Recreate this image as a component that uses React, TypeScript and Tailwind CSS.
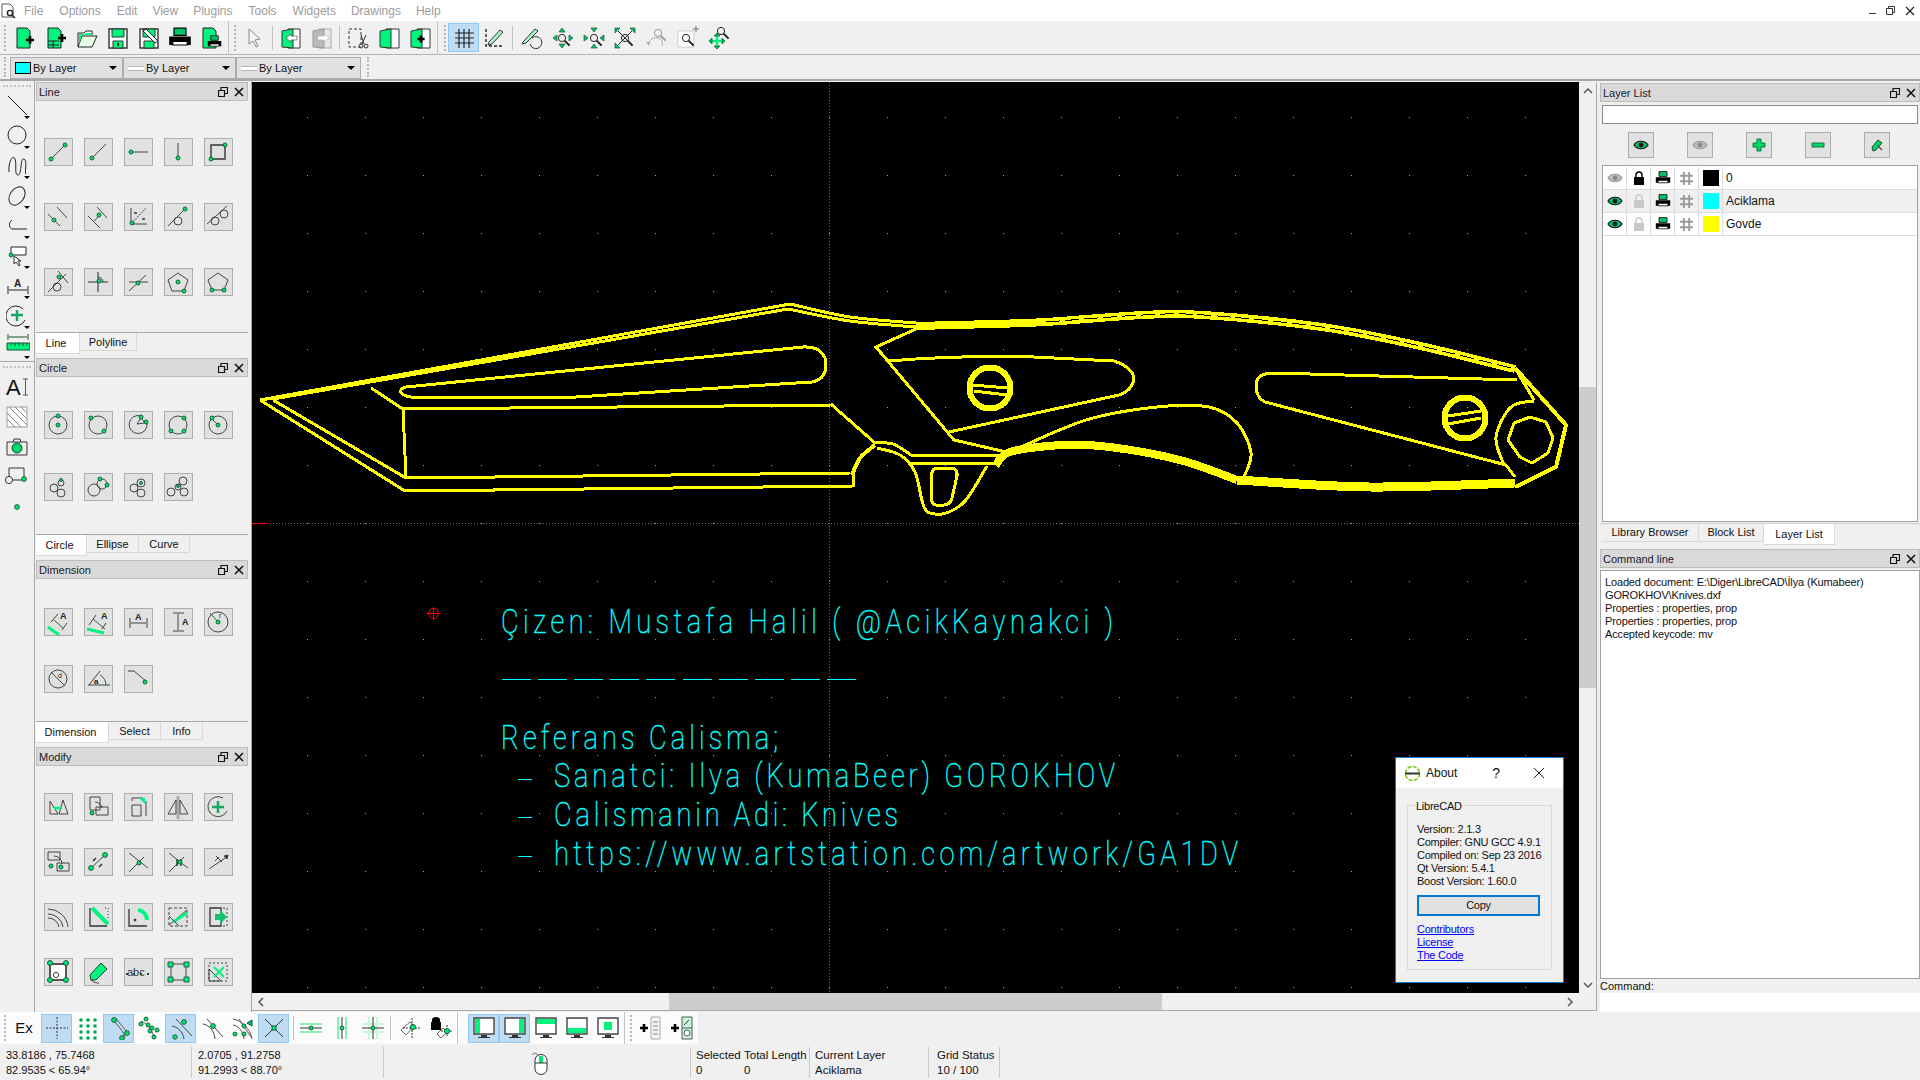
import React from 'react';

type Pt = [number, number];

// catmull-rom through the traced points, good enough for the knife curves
const smooth = (pts: Pt[]) => {
  let d = `M${pts[0][0]} ${pts[0][1]}`;
  for (let i = 0; i < pts.length - 1; i++) {
    const p0 = pts[i - 1] || pts[i];
    const p1 = pts[i];
    const p2 = pts[i + 1];
    const p3 = pts[i + 2] || p2;
    d += `C${p1[0] + (p2[0] - p0[0]) / 6} ${p1[1] + (p2[1] - p0[1]) / 6} ${p2[0] - (p3[0] - p1[0]) / 6} ${p2[1] - (p3[1] - p1[1]) / 6} ${p2[0]} ${p2[1]}`;
  }
  return d;
};

const GREEN = '#00f57f';

const Dot = ({ x, y, r = 2 }: { x: number; y: number; r?: number }) => (
  <circle cx={x} cy={y} r={r} fill="#00e676" stroke="#14532d" strokeWidth={0.9} />
);

const Mag = ({ x, y, c = '#222' }: { x: number; y: number; c?: string }) => (
  <g fill="none" stroke={c}>
    <circle cx={x} cy={y} r={3.6} strokeWidth={1} />
    <path d={`M${x + 2.6} ${y + 2.6}l5 5`} strokeWidth={2} />
  </g>
);

/* ---------- dock panel buttons, drawn in a 29x28 box ---------- */
const lineTools = [
  <><path d="M7 21 21 7" /><Dot x={7} y={21} /><Dot x={21} y={7} /></>,
  <><path d="M8 20 22 6" /><Dot x={8} y={20} /></>,
  <><path d="M7 14h17" /><Dot x={7} y={14} /></>,
  <><path d="M14 5v15" /><Dot x={14} y={20} /></>,
  <><path d="M7 7h14v14H7z" strokeWidth={1.4} /><Dot x={21} y={7} /><Dot x={7} y={21} /></>,
  <><path d="M13 4 23 15M4 11 16 23" /><Dot x={10} y={17} /></>,
  <><path d="M4 13 16 25M13 4 23 15" /><path d="M10 18 16 12" /><Dot x={15} y={12} /></>,
  <><path d="M7 5v16h16" /><path d="M7 21 22 5" strokeDasharray="2 1" /><path d="M10 10h3M18 16h3" strokeWidth={1.6} /><Dot x={8} y={20} /></>,
  <><path d="M4 23 21 6" /><circle cx={14} cy={18} r={4} /><Dot x={21} y={6} /></>,
  <><path d="M3 21 23 3" /><circle cx={11} cy={18} r={4} /><circle cx={20} cy={11} r={4} /></>,
  <><path d="M4 24 22 6M14 3l10 12" /><circle cx={13} cy={19} r={4} /><Dot x={15} y={9} /></>,
  <><path d="M4 14h20M14 4v20" strokeWidth={1.1} /><path d="M14 9a5 5 0 0 1 5 5" /><Dot x={15} y={13} /></>,
  <><path d="M5 23 22 7M5 14h19" /><Dot x={14} y={15} /></>,
  <><path d="M14 5 24 12 20 23H8L4 12z" /><Dot x={14} y={14} /><Dot x={20} y={23} /></>,
  <><path d="M14 5 24 12 20 22H8L4 12z" /><Dot x={8} y={22} /><Dot x={20} y={22} /></>,
];

const circleTools = [
  <><circle cx={14} cy={14} r={9} /><Dot x={14} y={5} /><Dot x={14} y={14} /></>,
  <><circle cx={14} cy={14} r={9} /><Dot x={7} y={7} /><Dot x={20} y={20} /></>,
  <><path d="M23 12a9 9 0 1 1-6-7" /><path d="M13 13l4-6 4 5z" /><Dot x={17} y={6} /><Dot x={22} y={11} /></>,
  <><circle cx={14} cy={14} r={9} /><Dot x={7} y={20} /><Dot x={20} y={20} /><Dot x={20} y={7} /></>,
  <><circle cx={14} cy={14} r={9} /><path d="M8 8l6 6" /><Dot x={8} y={7} /><Dot x={14} y={14} /></>,
  <><circle cx={10} cy={15} r={4} /><circle cx={17} cy={20} r={4} /><circle cx={17} cy={10} r={3} /><Dot x={17} y={7} r={1.5} /></>,
  <><circle cx={10} cy={17} r={6} /><circle cx={18} cy={11} r={5} /><Dot x={16} y={6} /><Dot x={23} y={12} /></>,
  <><circle cx={10} cy={15} r={4} /><circle cx={17} cy={20} r={4} /><circle cx={17} cy={10} r={4} /><Dot x={17} y={10} r={1.5} /></>,
  <><circle cx={7} cy={19} r={4} /><circle cx={20} cy={19} r={4} /><circle cx={19} cy={8} r={4} /><circle cx={14} cy={14} r={3} /><Dot x={14} y={13} r={1.5} /></>,
];

const Letter = ({ x, y, s = '9px' }: { x: number; y: number; s?: string }) => (
  <text x={x} y={y} fontSize={s} fontWeight="bold" fill="#222" stroke="none" fontFamily="Liberation Sans">A</text>
);

const dimTools = [
  <><path d="M4 19 15 27" stroke={GREEN} strokeWidth={3} /><path d="M7 14 14 6M18 22l5-7" /><path d="M10 12l9 8" stroke="#14532d" /><Letter x={16} y={11} /></>,
  <><path d="M3 21 20 25" stroke={GREEN} strokeWidth={3} /><path d="M5 17 12 7M18 21l4-6" /><path d="M9 11l12 10" stroke="#14532d" /><Letter x={17} y={11} /></>,
  <><path d="M6 10v10M23 10v10M7 15h15" /><Letter x={11} y={12} /></>,
  <><path d="M9 5h11M9 23h11M14 6v16" /><Letter x={18} y={17} /></>,
  <><circle cx={14} cy={14} r={10} /><path d="M6 5l8 9" stroke="#14532d" /><Dot x={14} y={14} /><text x={15} y={10} fontSize="7px" fill="#222" stroke="none">r</text></>,
  <><circle cx={14} cy={14} r={9} /><path d="M7 7l14 14" stroke="#14532d" /><text x={14} y={13} fontSize="7px" fill="#222" stroke="none">d</text></>,
  <><path d="M4 20h22M5 20 16 6" /><path d="M16 10a12 12 0 0 1 6 10" stroke="#14532d" /><text x={10} y={19} fontSize="8px" fontWeight="bold" fill="#222" stroke="none">a</text></>,
  <><path d="M4 6h6l13 11" /><Dot x={21} y={17} /></>,
];

const modifyTools = [
  <><path d="M6 21V8l8 13zM15 21l4-14 5 14z" /><path d="M10 15h8" stroke={GREEN} strokeWidth={2.5} /></>,
  <><path d="M6 4h10v13H6zM12 14h12v8H12z" /><path d="M11 9a7 7 0 0 1 7 6" /><Dot x={8} y={20} /></>,
  <><path d="M8 12h9v11H8zM8 8V5h11M22 8v15" /><path d="M15 5h6v6z" fill={GREEN} stroke="none" /></>,
  <><path d="M14 3v23" stroke="#aaa" strokeWidth={3} /><path d="M4 21 12 7v14zM24 21 16 7v14z" /></>,
  <><path d="M23 18a10 10 0 1 1-4-13" /><path d="M14 8v12M8 14h12" stroke="#17a860" strokeWidth={2.5} /></>,
  <><path d="M4 4h12v8H4zM13 15h12v8H13z" /><path d="M10 8a8 8 0 0 1 8 8" /><Dot x={7} y={18} /><Dot x={17} y={19} /></>,
  <><path d="M7 20 21 7" /><path d="M9 13l3-3M15 19l3-3" strokeWidth={1.5} /><Dot x={7} y={20} r={2.4} /><Dot x={21} y={7} r={2.4} /></>,
  <><path d="M5 5 24 20M5 24 20 9" /><Dot x={15} y={15} /></>,
  <><path d="M5 5 16 14 24 20M5 24 20 9" /><path d="M13 11v7M17 11v7" stroke="#14532d" strokeWidth={1.6} /><Dot x={16} y={14} /></>,
  <><path d="M5 21 24 8" /><path d="M12 8l6 6M15 9l-4 4" /><path d="M20 8l4-1-1 4z" fill="#14532d" /></>,
  <><path d="M4 6a20 20 0 0 1 20 18M4 11a15 15 0 0 1 15 13M4 15a11 11 0 0 1 11 9" /></>,
  <><path d="M6 5v18h17" strokeWidth={1.3} /><path d="M8 5 24 21" stroke={GREEN} strokeWidth={4} /><path d="M21 5h3v10" strokeDasharray="1 2" /></>,
  <><path d="M5 6v17h18" strokeWidth={1.3} /><path d="M14 7a10 10 0 0 1 9 10" stroke={GREEN} strokeWidth={4} /><circle cx={11} cy={17} r={1} fill="#222" /></>,
  <><path d="M5 5h18v18H5z" strokeDasharray="3 2" /><path d="M5 22 23 7" /><path d="M9 19 23 10" stroke={GREEN} strokeWidth={3} /><path d="M5 13l10 10" /></>,
  <><path d="M6 5h11v18H6z" strokeWidth={1.3} /><path d="M19 5h4v18h-4" strokeDasharray="2 2" /><path d="M11 11h5V7l7 7-7 7v-4h-5z" fill="#17c06c" stroke="none" /></>,
  <><path d="M6 6h16v16H6z" fill="#fff" strokeWidth={2} stroke="#555" /><circle cx={12} cy={17} r={2.6} /><Dot x={6} y={5} r={2.5} /><Dot x={22} y={5} r={2.5} /><Dot x={6} y={22} r={2.5} /><Dot x={22} y={22} r={2.5} /></>,
  <><path d="M6 17 17 5l6 6-11 11H7z" fill={GREEN} stroke="#222" /><path d="M7 22c3 3 6 3 8 3" /></>,
  <><text x={3} y={18} fontSize="11px" fill="#333" stroke="none" fontFamily="Liberation Sans">abc</text><path d="M2 16h24" stroke="#14532d" strokeDasharray="2 5" strokeWidth={2} /></>,
  <><path d="M7 6h15v16H7z" /><path d="M4 4h5v5H4zM20 4h5v5h-5zM4 19h5v5H4zM20 19h5v5h-5z" fill={GREEN} stroke="#14532d" /></>,
  <><path d="M5 5h18v18H5z" strokeDasharray="2 2" /><path d="M5 11v12h12z" /><path d="M10 9 20 19M20 9 10 19" stroke={GREEN} strokeWidth={2} /></>,
];

/* ---------- 24px toolbar icons ---------- */
const page = 'M4 2h10l3 3v17H4z';
const Plus = ({ x, y, s = 4 }: { x: number; y: number; s?: number }) => (
  <path d={`M${x - s} ${y}h${2 * s}M${x} ${y - s}v${2 * s}`} stroke="#000" strokeWidth={2.6} fill="none" />
);
const Printer = ({ x, y, k = 1 }: { x: number; y: number; k?: number }) => (
  <g transform={`translate(${x} ${y}) scale(${k})`}>
    <path d="M5 1h10v6H5z" fill="#00c46a" stroke="#000" />
    <path d="M1 8h18v7h-3v-3H4v3H1z" fill="#000" />
    <path d="M4 12h12v3H4z" fill="#fff" stroke="#000" />
  </g>
);
const Tri = ({ p }: { p: string }) => <path d={p} fill="#00c46a" stroke="#14532d" strokeWidth={0.7} />;

const topIcons: Record<string, React.ReactNode> = {
  newdoc: <><path d={page} fill={GREEN} stroke="#222" /><Plus x={17} y={14} /></>,
  template: <><path d={page} fill={GREEN} stroke="#222" /><path d="M4 15h11M4 19h11M9 15v7" stroke="#222" /><Plus x={18} y={12} /></>,
  open: <><path d="M3 21V7h6l2-2h6v4" fill="#fff" stroke="#222" /><path d="M3 21 7 10h15l-5 11z" fill="#e6ffe6" stroke="#222" /><path d="M4 18V8h6l1-1h5v2H7z" fill={GREEN} /></>,
  save: <><path d="M3 3h18v19H3z" fill="#fff" stroke="#333" strokeWidth={1.4} /><path d="M6 3h12v8H6zM7 15h10v7H7z" fill={GREEN} stroke="#333" /><path d="M11 17h2v3h-2z" fill="#333" /></>,
  saveas: <><path d="M3 3h18v19H3z" fill="#fff" stroke="#333" strokeWidth={1.4} /><path d="M6 3h12v8H6zM7 15h10v7H7z" fill={GREEN} stroke="#333" /><path d="M6 5l12 12 3-2L9 3z" fill="#fff" stroke="#222" /></>,
  print: <Printer x={0} y={1} k={1.2} />,
  preview: <><path d={page} fill={GREEN} stroke="#222" /><Printer x={8} y={9} k={0.75} /></>,
  arrow: <path d="M7 3v15l4-3 3 6 2-1-3-6 5-1z" fill="#f4f4f4" stroke="#888" />,
  prevdoc: <><path d="M9 3h12v19H9z" fill="#fff" stroke="#333" /><path d="M3 5l11-2v19l-11-1z" fill={GREEN} stroke="#333" /><path d="M7 12l5-4v2h6v4h-6v2z" fill="#fff" stroke="#333" strokeWidth={0.6} /></>,
  nextdoc: <><path d="M9 3h12v19H9z" fill="#e8e8e8" stroke="#aaa" /><path d="M3 5l11-2v19l-11-1z" fill="#b9b9b9" stroke="#999" /><path d="M19 12l-5-4v2H8v4h6v2z" fill="#fff" stroke="#aaa" strokeWidth={0.6} /></>,
  cut: <><path d="M3 3h12v18H3z" fill="none" stroke="#333" strokeDasharray="3 2" /><path d="M15 9l3 9M20 9l-4 9" stroke="#333" /><circle cx={15} cy={20} r={2} fill="none" stroke="#333" /><circle cx={20} cy={20} r={2} fill="none" stroke="#333" /></>,
  book: <><path d="M9 3h13v19H9z" fill="#fff" stroke="#333" /><path d="M3 5l11-2v19l-11-1z" fill={GREEN} stroke="#333" /></>,
  bookplus: <><path d="M9 3h13v19H9z" fill="#fff" stroke="#333" /><path d="M3 5l11-2v19l-11-1z" fill={GREEN} stroke="#333" /><Plus x={13} y={13} s={3.6} /></>,
  grid: <path d="M7 3v19M12 3v19M17 3v19M3 7h19M3 12h19M3 17h19" stroke="#222" strokeWidth={1.2} fill="none" />,
  draft: <><path d="M3 3v17h18" stroke="#222" strokeWidth={1.4} strokeDasharray="3 2" fill="none" /><path d="M6 16 17 4l3 2L9 18l-4 1z" fill="#a6f5c6" stroke="#333" /></>,
  redraw: <><path d="M3 16 15 3l3 2L6 17l-4 1z" fill="#a6f5c6" stroke="#333" /><path d="M12 12a6 6 0 1 1-2 6" fill="none" stroke="#333" /></>,
  zoomin: <><Mag x={11} y={12} /><Tri p="M11 2l3 4H8z" /><Tri p="M11 22l3-4H8z" /><Tri p="M2 12l4-3v6z" /><Tri p="M22 12l-4-3v6z" /></>,
  zoomout: <><Mag x={12} y={12} /><Tri p="M12 6l3-4H9z" /><Tri p="M12 18l3 4H9z" /><Tri p="M6 12l-4-3v6z" /><Tri p="M18 12l4-3v6z" /></>,
  zoomauto: <><path d="M5 5l14 14M19 5 5 19" stroke="#222" fill="none" /><Mag x={12} y={12} /><Tri p="M2 2h5L2 7z" /><Tri p="M22 2h-5l5 5z" /><Tri p="M2 22h5l-5-5z" /></>,
  zoomprev: <><Mag x={14} y={7} c="#999" /><path d="M4 18a9 9 0 0 1 11-6 6 6 0 0 1 3 8" stroke="#aaa" fill="none" /><path d="M2 16l4 0-1 4z" fill="#aaa" /></>,
  zoomwin: <><path d="M3 5h16v16H3z" fill="#fff" stroke="#ccc" /><Mag x={11} y={12} /><path d="M21 0v6M18 3h6" stroke="#777" /></>,
  zoompan: <><path d="M5 15h12M11 9v12" stroke={GREEN} strokeWidth={2.4} fill="none" /><Tri p="M3 15l3-3v6z" /><Tri p="M19 15l-3-3v6z" /><Tri p="M11 23l-3-3h6z" /><Tri p="M11 7l-3 3h6z" /><Mag x={15} y={5} /></>,
};

const sideIcons: Record<string, React.ReactNode> = {
  line: <path d="M2 2 21 21" stroke="#222" fill="none" />,
  circle: <circle cx={11} cy={11} r={9} fill="none" stroke="#222" />,
  spline: <path d="M3 18C2 8 7 0 9 5s-1 16 3 16 2-18 6-16 0 14 2 15" fill="none" stroke="#222" />,
  ellipse: <ellipse cx={11} cy={12} rx={7} ry={10} transform="rotate(35 11 12)" fill="none" stroke="#222" />,
  poly: <path d="M6 6c-4 3-3 9 1 9h14" fill="none" stroke="#222" />,
  select: <><path d="M5 3h15v8H5z" fill="#fff" stroke="#222" /><Dot x={5} y={11} /><path d="M8 12v8l2-2 3 4 1-1-2-4h3z" fill="#fff" stroke="#333" /></>,
  dim: <><path d="M2 12v8M22 12v8M3 16h18" stroke="#222" fill="none" /><text x={8} y={13} fontSize="10px" fontWeight="bold" fontFamily="Liberation Sans" fill="#222">A</text></>,
  rotate: <><path d="M19 16a10 10 0 1 1-2-11" fill="none" stroke="#222" /><path d="M11 6v11M5 11h12" stroke="#17a860" strokeWidth={2.4} /></>,
  measure: <><path d="M2 0v6M22 0v6M3 3h18" stroke="#14532d" fill="none" /><path d="M1 9h23v7H1z" fill={GREEN} stroke="#14532d" /><path d="M5 9v3M9 9v3M13 9v3M17 9v3M21 9v3" stroke="#14532d" /></>,
  text: <><text x={1} y={20} fontSize="22px" fontFamily="Liberation Sans" fill="#111">A</text><path d="M18 4h5M20.500 4v16M18 20h5" stroke="#555" fill="none" /></>,
  hatch: <><path d="M2 2h20v20H2z" fill="#fff" stroke="#bbb" strokeWidth={1.4} /><path d="M2 8 8 2M2 14 14 2M2 20 20 2M8 22 22 8M14 22l8-8" transform="matrix(-1 0 0 1 24 0)" stroke="#888" fill="none" /></>,
  camera: <><path d="M2 7h20v13H2zM8 7l1-3h6l1 3" fill="#eee" stroke="#333" /><circle cx={12} cy={13} r={5} fill="#00d46a" stroke="#14532d" /></>,
  block: <><path d="M4 12V3h15v9" fill="none" stroke="#333" /><circle cx={4} cy={15} r={3.6} fill="none" stroke="#333" /><path d="M7 15h12" stroke="#333" /><Dot x={19} y={14} r={2.4} /></>,
  dot: <Dot x={12} y={12} r={2.4} />,
};

const bottomIcons: Record<string, React.ReactNode> = {
  cross: <path d="M1 12h22M12 1v22" stroke="#333" strokeDasharray="2 1.5" fill="none" />,
  gridsnap: <>{[4, 10, 16, 22].flatMap(y => [5, 12, 19].map(x => <circle key={`${x}-${y}`} cx={x} cy={y} r={1.8} fill="#00a85a" />))}</>,
  endpoint: <><path d="M6 3c3 6 9 9 12 18M9 2c3 6 9 9 12 17" stroke="#555" fill="none" /><Dot x={7} y={4} r={2.4} /><Dot x={20} y={17} r={2.4} /><Dot x={15} y={22} r={2.4} /></>,
  entity: <><path d="M3 5c6 2 11 9 14 18" stroke="#555" fill="none" /><Dot x={3} y={8} r={2} /><Dot x={8} y={3} r={2} /><Dot x={10} y={9} r={2} /><Dot x={14} y={12} r={2} /><Dot x={19} y={14} r={2} /><Dot x={16} y={21} r={2} /><Dot x={12} y={15} r={2} /></>,
  center: <><path d="M3 10c6 1 11 6 12 13M7 3l16 17" stroke="#444" fill="none" /><Dot x={6} y={21} r={2.2} /><Dot x={15} y={6} r={2.4} /></>,
  intersect: <><path d="M3 8c6 1 11 6 12 15M7 3l16 18" stroke="#444" fill="none" /><Dot x={13} y={10} r={2.4} /></>,
  middle: <><path d="M2 9c6 1 10 6 11 14M2 3c9 2 17 9 19 20M8 3l12 18" stroke="#555" fill="none" /><Dot x={13} y={10} r={2} /><Dot x={4} y={18} r={2} /><Dot x={13} y={18} r={2} /><path d="M21 4l-5 3 5 3z" fill="#00c46a" stroke="#14532d" /></>,
  cross2: <><path d="M3 3l18 18M21 3 3 21" stroke="#333" fill="none" /><path d="M10 10h4v4h-4z" fill={GREEN} stroke="#14532d" /></>,
  resH: <><path d="M1 8h22M1 16h22" stroke="#8ef0b8" strokeWidth={2} fill="none" /><path d="M1 12h22" stroke="#333" /><Dot x={12} y={12} /></>,
  resV: <><path d="M8 1v22M16 1v22" stroke="#8ef0b8" strokeWidth={2} fill="none" /><path d="M12 1v22" stroke="#333" /><Dot x={12} y={12} /></>,
  resB: <><path d="M8 1v22M16 1v22M1 8h22M1 16h22" stroke="#c8f8dc" strokeWidth={2} fill="none" /><path d="M12 1v22M1 12h22" stroke="#333" /><Dot x={12} y={12} /></>,
  tag: <><path d="M3 14 12 6l4 4-8 9z" fill="#fff" stroke="#666" /><path d="M14 2v20M5 12h18" stroke="#333" strokeDasharray="2 1" /><Dot x={15} y={11} r={2.6} /></>,
  locktag: <><path d="M3 4a4 3 0 0 1 8 0v2h1v8H2V6h1z" fill="#000" /><path d="M8 18l6-6 4 4-6 6z" fill="#fff" stroke="#666" /><path d="M18 9v12M12 15h11" stroke="#333" strokeDasharray="2 1" /><Dot x={18} y={15} r={2.6} /></>,
  screen1: <><path d="M2 2h20v16H2z" fill="#fff" stroke="#444" strokeWidth={1.4} /><path d="M3 3h5v14H3z" fill={GREEN} /><path d="M9 19h6v2h3v1H6v-1h3z" fill="#333" /></>,
  screen2: <><path d="M2 2h20v16H2z" fill="#fff" stroke="#444" strokeWidth={1.4} /><path d="M16 3h5v14h-5z" fill={GREEN} /><path d="M9 19h6v2h3v1H6v-1h3z" fill="#333" /></>,
  screen3: <><path d="M2 2h20v16H2z" fill="#fff" stroke="#444" strokeWidth={1.4} /><path d="M3 3h18v5H3z" fill={GREEN} /><path d="M9 19h6v2h3v1H6v-1h3z" fill="#333" /></>,
  screen4: <><path d="M2 2h20v16H2z" fill="#fff" stroke="#444" strokeWidth={1.4} /><path d="M3 12h18v5H3z" fill={GREEN} /><path d="M9 19h6v2h3v1H6v-1h3z" fill="#333" /></>,
  screen5: <><path d="M2 2h20v16H2z" fill="#fff" stroke="#444" strokeWidth={1.4} /><path d="M8 6h8v8H8z" fill={GREEN} /><path d="M9 19h6v2h3v1H6v-1h3z" fill="#333" /></>,
  addlist: <><Plus x={5} y={12} s={4} /><path d="M12 1h9v22h-9z" fill="#f4f4f4" stroke="#aaa" /><path d="M14 6h5M14 10h5M14 14h5M14 18h5" stroke="#888" /></>,
  addwidget: <><Plus x={5} y={12} s={4} /><path d="M12 1h10v22H12z" fill="#c8f8dc" stroke="#555" /><path d="M12 12h10" stroke="#555" /><path d="M14 9l5-5" stroke="#333" /><circle cx={17} cy={17} r={3} fill="#fff" stroke="#555" /></>,
};

const Ico = ({ children, s = 24 }: { children: React.ReactNode; s?: number }) => (
  <svg width={s} height={s} viewBox="0 0 24 24" className="shrink-0">{children}</svg>
);

const Handle = ({ className = '' }: { className?: string }) => (
  <div className={`w-[2px] shrink-0 border-l-2 border-dotted border-[#b5b5b5] ${className}`} />
);

const Sep = ({ className = '' }: { className?: string }) => (
  <div className={`w-[1px] shrink-0 bg-[#c4c4c4] ${className}`} />
);

const TBtn = ({ n, active, set }: { n: string; active?: boolean; set: Record<string, React.ReactNode> }) => (
  <div className={`w-[31px] h-[29px] flex items-center justify-center shrink-0 ${active ? 'bg-[#c0dcf3] border border-[#90c8f6]' : ''}`}>
    <Ico>{set[n]}</Ico>
  </div>
);

const Menu = () => (
  <div className="h-[21px] bg-white flex items-center relative text-[12px] text-[#9b9b9b]">
    <svg width="16" height="16" viewBox="0 0 16 16" className="ml-[1px] shrink-0">
      <path d="M1 1h8l3 3v10H1z" fill="#fff" stroke="#555" />
      <circle cx="9" cy="10" r="2.6" fill="none" stroke="#222" strokeWidth="1.4" />
      <path d="M11 12l3 3" stroke="#222" strokeWidth="1.6" />
    </svg>
    <span className="ml-[7px]">File</span>
    <span className="ml-[16px]">Options</span>
    <span className="ml-[16px]">Edit</span>
    <span className="ml-[15px]">View</span>
    <span className="ml-[15px]">Plugins</span>
    <span className="ml-[16px]">Tools</span>
    <span className="ml-[16px]">Widgets</span>
    <span className="ml-[15px]">Drawings</span>
    <span className="ml-[15px]">Help</span>
    <div className="ml-auto flex items-center gap-[9px] pr-[5px] text-black">
      <svg width="8" height="8" viewBox="0 0 8 8"><path d="M0 6.5h7" stroke="#333" /></svg>
      <svg width="10" height="10" viewBox="0 0 10 10"><path d="M.5 2.5h6v6h-6zM2.5 2.5v-2h6v6h-2" fill="none" stroke="#333" /></svg>
      <svg width="10" height="10" viewBox="0 0 10 10"><path d="M1 1l8 8M9 1 1 9" stroke="#222" strokeWidth="1.2" /></svg>
    </div>
  </div>
);

const Toolbar = () => (
  <div className="h-[34px] flex items-center border-b border-[#b4b4b4] bg-[#f0f0f0]">
    <Handle className="ml-[4px] h-[26px] mr-[3px]" />
    {['newdoc', 'template', 'open', 'save', 'saveas', 'print', 'preview'].map(n => <TBtn key={n} n={n} set={topIcons} />)}
    <Sep className="h-[34px] ml-[2px] bg-[#b4b4b4]" />
    <Handle className="ml-[5px] h-[26px] mr-[2px]" />
    <TBtn n="arrow" set={topIcons} />
    <Sep className="h-[24px] ml-[3px] mr-[2px]" />
    <TBtn n="prevdoc" set={topIcons} />
    <TBtn n="nextdoc" set={topIcons} />
    <Sep className="h-[24px] ml-[2px] mr-[2px]" />
    <TBtn n="cut" set={topIcons} />
    <TBtn n="book" set={topIcons} />
    <TBtn n="bookplus" set={topIcons} />
    <Sep className="h-[34px] ml-[2px] bg-[#b4b4b4]" />
    <Handle className="ml-[6px] h-[26px] mr-[2px]" />
    <TBtn n="grid" active set={topIcons} />
    <TBtn n="draft" set={topIcons} />
    <Sep className="h-[24px] ml-[2px] mr-[3px]" />
    {['redraw', 'zoomin', 'zoomout', 'zoomauto', 'zoomprev', 'zoomwin', 'zoompan'].map(n => <TBtn key={n} n={n} set={topIcons} />)}
  </div>
);

const Combo = ({ w, swatch, label }: { w: string; swatch?: boolean; label: string }) => (
  <div className={`${w} h-[22px] bg-[#e1e1e1] border border-[#adadad] flex items-center text-[11px] text-[#111] pl-[4px] pr-[5px] shrink-0`}>
    {swatch ? (
      <span className="w-[16px] h-[12px] bg-[#00ffff] border border-black mr-[2px]" />
    ) : (
      <span className="w-[16px] h-[5px] border-y border-[#b5b5b5] bg-white mr-[2px]" />
    )}
    <span>{label}</span>
    <span className="ml-auto w-0 h-0 border-x-[4px] border-x-transparent border-t-[4px] border-t-black" />
  </div>
);

const PropBar = () => (
  <div className="h-[26px] flex items-start pt-[2px] border-b-2 border-[#a8a8a8] bg-[#f0f0f0]">
    <Handle className="ml-[4px] h-[20px] mr-[4px]" />
    <Combo w="w-[113px]" swatch label="By Layer" />
    <Combo w="w-[113px]" label="By Layer" />
    <Combo w="w-[125px]" label="By Layer" />
    <Handle className="ml-[6px] h-[20px]" />
  </div>
);

const leftTop = ['line', 'circle', 'spline', 'ellipse', 'poly', 'select', 'dim', 'rotate', 'measure'];
const leftBottom = ['text', 'hatch', 'camera', 'block', 'dot'];

const LeftColumn = () => (
  <div className="w-[35px] shrink-0 border-r border-[#a8a8a8] flex flex-col items-center">
    <div className="w-[28px] h-[3px] mt-[4px] border-t-2 border-dotted border-[#c4c4c4]" />
    <div className="flex flex-col gap-[6px] mt-[6px] mb-[3px] w-full pl-[1px]">
      {leftTop.map(n => (
        <div key={n} className="h-[24px] relative flex justify-center">
          <Ico>{sideIcons[n]}</Ico>
          <span className="absolute right-[4px] bottom-[-1px] w-0 h-0 border-x-[3px] border-x-transparent border-t-[3px] border-t-black" />
        </div>
      ))}
    </div>
    <div className="w-full h-[1px] bg-[#a8a8a8]" />
    <div className="w-[28px] h-[3px] mt-[4px] border-t-2 border-dotted border-[#c4c4c4]" />
    <div className="flex flex-col gap-[6px] mt-[6px]">
      {leftBottom.map(n => <Ico key={n}>{sideIcons[n]}</Ico>)}
    </div>
  </div>
);

const TitleBtns = () => (
  <div className="ml-auto flex items-center gap-[6px] pr-[3px]">
    <svg width="10" height="10" viewBox="0 0 10 10"><path d="M.5 3.5h6v6h-6zM3 3.5v-3h6.500v6h-3" fill="none" stroke="#111" strokeWidth="1.200" /></svg>
    <svg width="10" height="10" viewBox="0 0 10 10"><path d="M1 1l8 8M9 1 1 9" stroke="#111" strokeWidth="1.600" /></svg>
  </div>
);

const DockTitle = ({ title, className = '' }: { title: string; className?: string }) => (
  <div className={`h-[19px] bg-[#d9d9d9] border border-[#bcbcbc] flex items-center pl-[2px] text-[11px] text-[#1a1a2a] shrink-0 ${className}`}>
    <span className="pt-[2px]">{title}</span>
    <TitleBtns />
  </div>
);

const ToolBtn = ({ children }: { children: React.ReactNode }) => (
  <div className="w-[29px] h-[28px] bg-[#e1e1e1] border border-[#adadad]">
    <svg width="27" height="26" viewBox="1 1 27 26" className="block" fill="none" stroke="#333" strokeWidth={0.9}>{children}</svg>
  </div>
);

const Tabs = ({ tabs }: { tabs: [string, string][] }) => (
  <div className="flex border-t border-[#a8a8a8] h-[21px] text-[11px] text-[#111] w-[212px] shrink-0">
    {tabs.map(([t, w], i) => (
      <div
        key={t}
        className={`${w} flex items-center justify-center ${i === 0 ? 'bg-white h-[21px] border-r border-b border-[#d9d9d9] pr-[3px] pt-[1px]' : 'h-[18px] border-r border-b border-[#d9d9d9] pt-[1px]'}`}
      >
        {t}
      </div>
    ))}
  </div>
);

const LeftPanels = () => (
  <div className="w-[217px] shrink-0 pl-[1px] flex flex-col border-r border-[#a8a8a8]">
    <DockTitle title="Line" className="w-[212px] mt-[1px]" />
    <div className="grid grid-cols-[repeat(5,29px)] gap-x-[11px] gap-y-[37px] pl-[8px] pt-[37px] pb-[36px]">
      {lineTools.map((c, i) => <ToolBtn key={i}>{c}</ToolBtn>)}
    </div>
    <Tabs tabs={[['Line', 'w-[44px]'], ['Polyline', 'w-[57px]']]} />
    <DockTitle title="Circle" className="w-[212px] mt-[5px]" />
    <div className="grid grid-cols-[repeat(5,29px)] gap-x-[11px] gap-y-[34px] pl-[8px] pt-[34px] pb-[33px]">
      {circleTools.map((c, i) => <ToolBtn key={i}>{c}</ToolBtn>)}
    </div>
    <Tabs tabs={[['Circle', 'w-[51px]'], ['Ellipse', 'w-[52px]'], ['Curve', 'w-[51px]']]} />
    <DockTitle title="Dimension" className="w-[212px] mt-[5px]" />
    <div className="grid grid-cols-[repeat(5,29px)] gap-x-[11px] gap-y-[29px] pl-[8px] pt-[29px] pb-[28px]">
      {dimTools.map((c, i) => <ToolBtn key={i}>{c}</ToolBtn>)}
    </div>
    <Tabs tabs={[['Dimension', 'w-[73px]'], ['Select', 'w-[52px]'], ['Info', 'w-[42px]']]} />
    <DockTitle title="Modify" className="w-[212px] mt-[5px]" />
    <div className="grid grid-cols-[repeat(5,29px)] gap-x-[11px] gap-y-[27px] pl-[8px] pt-[27px]">
      {modifyTools.map((c, i) => <ToolBtn key={i}>{c}</ToolBtn>)}
    </div>
  </div>
);

const cadLines: { t: string; x: number; end: number; y: number }[] = [
  { t: 'Çizen: Mustafa Halil ( @AcikKaynakci )', x: 501, end: 1113, y: 633 },
  { t: 'Referans Calisma;', x: 501, end: 778, y: 749 },
  { t: 'Sanatci: Ilya (KumaBeer) GOROKHOV', x: 554, end: 1115, y: 787 },
  { t: 'Calismanin Adi: Knives', x: 554, end: 898, y: 826 },
  { t: 'https://www.artstation.com/artwork/GA1DV', x: 554, end: 1238, y: 865 },
];

const CAD_SQUEEZE = 0.8;

const Knife = () => (
  <g fill="none" stroke="#ffff00" strokeWidth={3} shapeRendering="crispEdges">
    {/* blade */}
    <path d="M260 400 790 304M273 399 788 309M260 400 405 491 853 486V473M273 400 406 478 850 473M371 388 403 409 832 405 875 443M403 409 406 478" />
    <path d="M260 400 273 398" />
    <path d={smooth([[790, 304], [850, 317], [916, 323]])} />
    <path d={smooth([[788, 309], [850, 321], [916, 327]])} />
    {/* blade slot */}
    <path d="M406 387 803 347Q820 346 825 358L826 368Q824 380 812 382L576 397H411Q399 395 401 390 402 388 406 387z" />
    {/* choil and guard */}
    <path d={smooth([[852, 475], [860, 458], [875, 445]])} strokeWidth={4} />
    <path d={smooth([[875, 443], [893, 444], [911, 455]])} />
    <path d={smooth([[877, 448], [900, 455], [915, 472], [924, 507], [935, 514], [949, 512], [966, 500], [987, 466]])} />
    <path d="M911 455H1006M911 463H996" />
    <path d="M931 478Q931 468 938 468H950Q958 468 957 476L952 498Q950 505 944 505H936Q932 505 931 498z" />
    {/* handle spine and belly */}
    <path d={smooth([[916, 326], [992, 324], [1046, 322], [1143, 315], [1204, 315], [1322, 327], [1416, 345], [1515, 369]])} strokeWidth={8} />
    <path d={smooth([[1046, 322], [1143, 315], [1204, 315], [1322, 327], [1416, 345], [1515, 369]])} stroke="#000" strokeWidth={1} strokeDasharray="14 5" />
    <path d={smooth([[996, 465], [1010, 452], [1062, 445], [1110, 447], [1180, 460], [1237, 480]])} strokeWidth={8} />
    <path d={smooth([[1237, 480], [1369, 487], [1515, 483]])} strokeWidth={9} />
    <path d="M1515 368 1566 425 1556 467 1515 487" strokeWidth={4} />
    <path d="M1515 368 1534 400" />
    {/* front scale */}
    <path d="M916 329 876 347 954 440 1006 452" />
    <path d="M888 361Q960 355 1034 357L1114 361Q1132 367 1134 378 1133 390 1119 395L949 432" />
    <circle cx={990} cy={388} r={22} />
    <circle cx={990} cy={388} r={19} />
    <path d="M973 385 1007 388M974 391 1007 395" />
    {/* middle scale */}
    <path d={smooth([[1010, 452], [1086, 420], [1157, 407], [1209, 407], [1237, 423], [1251, 453], [1244, 477]])} />
    {/* rear scale */}
    <path d="M1517 380 1275 373Q1256 373 1256 385 1256 398 1265 402L1506 465 1515 477" />
    <circle cx={1465} cy={418} r={22} />
    <circle cx={1465} cy={418} r={19} />
    <path d="M1448 416 1481 411M1448 424 1481 418" />
    <path d={smooth([[1534, 401], [1511, 407], [1496, 437], [1504, 465]])} />
    <path d="M1530 417 1546 422 1553 438 1548 453 1532 463 1520 457 1508 440 1514 423z" />
  </g>
);

const Canvas = () => (
  <svg width="1327" height="911" viewBox="252 82 1327 911" className="block bg-black shrink-0">
    <defs>
      <pattern id="griddots" x="17" y="1" width="58" height="58" patternUnits="userSpaceOnUse">
        <rect width="1" height="1" fill="#a0a0a0" />
      </pattern>
    </defs>
    <rect x="252" y="82" width="1327" height="911" fill="url(#griddots)" />
    <path d="M829.500 82V993M252 523.500H1580" stroke="#6b6b6b" strokeDasharray="1 2" />
    <path d="M252 523.500H268" stroke="#ff0000" />
    <Knife />
    <g fill="#00ffff" stroke="#00ffff" strokeWidth={0.5} fontFamily="Roboto" fontWeight={100} fontSize="34px">
      {cadLines.map(l => (
        <text
          key={l.t}
          transform={`translate(${l.x} ${l.y}) scale(${CAD_SQUEEZE} 1)`}
          textLength={(l.end - l.x) / CAD_SQUEEZE}
          lengthAdjust="spacing"
        >
          {l.t}
        </text>
      ))}
    </g>
    <path d="M502 679.500H857" stroke="#00ffff" strokeWidth={1} strokeDasharray="29 7.100" shapeRendering="crispEdges" />
    <path d="M518 779.500h14M518 817.500h14M518 856.500h14" stroke="#00ffff" shapeRendering="crispEdges" />
    <g fill="none" stroke="#ff0000">
      <circle cx="433.500" cy="613.500" r="5" />
      <path d="M433.500 607v13M427 613.500h13" />
    </g>
  </svg>
);

const Chevron = ({ d }: { d: string }) => (
  <svg width="10" height="10" viewBox="0 0 10 10"><path d={d} fill="none" stroke="#555" strokeWidth="1.500" /></svg>
);

const Center = () => (
  <div className="w-[1345px] shrink-0 flex flex-col">
    <div className="flex h-[912px] pt-[1px]">
      <Canvas />
      <div className="w-[18px] flex flex-col border-r border-[#a8a8a8]">
        <div className="h-[17px] flex items-center justify-center"><Chevron d="M1 7l4-4 4 4" /></div>
        <div className="h-[288px]" />
        <div className="h-[301px] bg-[#cdcdcd]" />
        <div className="flex-1" />
        <div className="h-[17px] flex items-center justify-center"><Chevron d="M1 3l4 4 4-4" /></div>
      </div>
    </div>
    <div className="h-[18px] flex border-b border-[#a8a8a8] border-r">
      <div className="w-[17px] flex items-center justify-center"><Chevron d="M7 1 3 5l4 4" /></div>
      <div className="w-[400px]" />
      <div className="w-[493px] bg-[#cdcdcd]" />
      <div className="flex-1" />
      <div className="w-[17px] flex items-center justify-center mr-[18px]"><Chevron d="M3 1l4 4-4 4" /></div>
    </div>
  </div>
);

const Eye = ({ on }: { on: boolean }) => (
  <svg width="16" height="12" viewBox="0 0 16 12">
    <path d="M1 6c3-5 11-5 14 0-3 5-11 5-14 0z" fill={on ? '#00c46a' : '#bdbdbd'} stroke={on ? '#111' : '#999'} strokeWidth="1.200" />
    <circle cx="8" cy="6" r="2.400" fill={on ? '#111' : '#8a8a8a'} />
  </svg>
);

const Lock = ({ on }: { on: boolean }) => (
  <svg width="12" height="14" viewBox="0 0 12 14">
    <path d="M3 6V4a3 3 0 0 1 6 0v2" fill="none" stroke={on ? '#000' : '#c8c8c8'} strokeWidth="1.400" />
    <path d="M1 6h10v8H1z" fill={on ? '#000' : '#c8c8c8'} />
  </svg>
);

const HashIco = () => (
  <svg width="15" height="15" viewBox="0 0 14 14"><path d="M4.500 1v12M9.500 1v12M1 4.500h12M1 9.500h12" stroke="#9a9a9a" strokeWidth="1.800" /></svg>
);

const PrintSm = () => (
  <svg width="16" height="16" viewBox="0 0 20 20"><Printer x={0} y={1} /></svg>
);

const layers = [
  { name: '0', eye: false, lock: true, color: 'bg-black', rowBg: 'bg-white' },
  { name: 'Aciklama', eye: true, lock: false, color: 'bg-[#00ffff]', rowBg: 'bg-[#f0f0f0]' },
  { name: 'Govde', eye: true, lock: false, color: 'bg-[#ffff00]', rowBg: 'bg-white' },
];

const Cell = ({ children }: { children: React.ReactNode }) => (
  <div className="w-[24px] h-full flex items-center justify-center border-r border-[#dcdcdc]">{children}</div>
);

const LayerBtn = ({ children }: { children: React.ReactNode }) => (
  <div className="w-[26px] h-[26px] bg-[#e1e1e1] border border-[#adadad] flex items-center justify-center">{children}</div>
);

const RightPanel = () => (
  <div className="flex-1 flex flex-col pl-[3px] text-[11px] text-[#111] min-w-0">
    <DockTitle title="Layer List" className="mt-[2px]" />
    <div className="h-[19px] mx-[2px] mt-[3px] bg-white border border-[#8a8a8a]" />
    <div className="flex justify-between pl-[28px] pr-[30px] pt-[8px] pb-[7px]">
      <LayerBtn><Eye on /></LayerBtn>
      <LayerBtn><Eye on={false} /></LayerBtn>
      <LayerBtn><svg width="14" height="14" viewBox="0 0 14 14"><path d="M5 1h4v4h4v4H9v4H5V9H1V5h4z" fill="#00d46a" stroke="#0c7a42" /></svg></LayerBtn>
      <LayerBtn><svg width="14" height="14" viewBox="0 0 14 14"><path d="M1 5h12v4H1z" fill="#00d46a" stroke="#0c7a42" /></svg></LayerBtn>
      <LayerBtn><svg width="16" height="16" viewBox="0 0 16 16"><path d="M3 10 9 3l4 3-6 7-3 1z" fill="#00d46a" stroke="#14532d" /><path d="M8 8l5 5" stroke="#555" strokeWidth="1.500" /></svg></LayerBtn>
    </div>
    <div className="h-[357px] mx-[2px] bg-white border border-[#a0a0a0] pt-[1px] text-[12px]">
      {layers.map(l => (
        <div key={l.name} className={`h-[23px] flex items-center border-b border-[#dcdcdc] ${l.rowBg}`}>
          <Cell><Eye on={l.eye} /></Cell>
          <Cell><Lock on={l.lock} /></Cell>
          <Cell><PrintSm /></Cell>
          <Cell><HashIco /></Cell>
          <div className="w-[24px] h-full flex items-center justify-center border-r border-[#dcdcdc]">
            <span className={`w-[16px] h-[16px] ${l.color}`} />
          </div>
          <span className="pl-[3px]">{l.name}</span>
        </div>
      ))}
    </div>
    <div className="flex pl-[2px] h-[21px] mt-[1px] border-t border-[#d0d0d0]">
      <div className="w-[97px] h-[18px] bg-[#f0f0f0] border-r border-b border-[#d9d9d9] flex items-center justify-center">Library Browser</div>
      <div className="w-[65px] h-[18px] bg-[#f0f0f0] border-r border-b border-[#d9d9d9] flex items-center justify-center">Block List</div>
      <div className="w-[71px] h-[21px] bg-white border-r border-b border-[#d9d9d9] flex items-center justify-center">Layer List</div>
    </div>
    <DockTitle title="Command line" className="mt-[5px]" />
    <div className="h-[409px] mt-[2px] bg-white border border-[#a0a0a0] px-[4px] pt-[5px] text-[11px] tracking-[-0.15px] leading-[13px]">
      <div>Loaded document: E:\Diger\LibreCAD\İlya (Kumabeer)</div>
      <div>GOROKHOV\Knives.dxf</div>
      <div>Properties : properties, prop</div>
      <div>Properties : properties, prop</div>
      <div>Accepted keycode: mv</div>
    </div>
    <div className="h-[14px] leading-[14px] text-[11px]">Command:</div>
    <div className="flex-1 bg-white" />
  </div>
);

const BottomBar = () => (
  <div className="h-[32px] flex bg-[#f0f0f0]">
    <div className="w-[698px] bg-[#fbfbfb] flex items-center">
      <Handle className="ml-[4px] h-[26px]" />
      <span className="w-[34px] shrink-0 ml-[1px] text-center text-[15px] text-[#111]">Ex</span>
      <TBtn n="cross" active set={bottomIcons} />
      <TBtn n="gridsnap" set={bottomIcons} />
      <TBtn n="endpoint" active set={bottomIcons} />
      <TBtn n="entity" set={bottomIcons} />
      <TBtn n="center" active set={bottomIcons} />
      <TBtn n="intersect" set={bottomIcons} />
      <TBtn n="middle" set={bottomIcons} />
      <TBtn n="cross2" active set={bottomIcons} />
      <Sep className="h-[24px] ml-[4px] mr-[1px]" />
      <TBtn n="resH" set={bottomIcons} />
      <TBtn n="resV" set={bottomIcons} />
      <TBtn n="resB" set={bottomIcons} />
      <Sep className="h-[24px] ml-[2px] mr-[3px]" />
      <TBtn n="tag" set={bottomIcons} />
      <TBtn n="locktag" set={bottomIcons} />
      <Sep className="h-[32px] ml-[1px] mr-[10px] bg-[#b4b4b4]" />
      <TBtn n="screen1" active set={bottomIcons} />
      <TBtn n="screen2" active set={bottomIcons} />
      <TBtn n="screen3" set={bottomIcons} />
      <TBtn n="screen4" set={bottomIcons} />
      <TBtn n="screen5" set={bottomIcons} />
      <Sep className="h-[32px] ml-[1px] bg-[#b4b4b4]" />
      <Handle className="ml-[5px] h-[26px] mr-[3px]" />
      <TBtn n="addlist" set={bottomIcons} />
      <TBtn n="addwidget" set={bottomIcons} />
    </div>
  </div>
);

const StatusCell = ({ w, a, b, size = 'text-[11.5px]', pad = 'pl-[5px]' }: { w: string; a: string; b: string; size?: string; pad?: string }) => (
  <div className={`${w} ${size} ${pad} shrink-0 h-[31px] border-r border-[#c8c8c8] flex flex-col justify-center leading-[15px] text-[#111]`}>
    <span>{a}</span>
    <span>{b}</span>
  </div>
);

const StatusBar = () => (
  <div className="h-[35px] flex items-start pt-[3px] bg-[#f0f0f0]">
    <StatusCell w="w-[192px]" a="33.8186 , 75.7468" b="82.9535 < 65.94°" size="text-[11px]" pad="pl-[6px]" />
    <StatusCell w="w-[192px]" a="2.0705 , 91.2758" b="91.2993 < 88.70°" size="text-[11px]" pad="pl-[6px]" />
    <div className="w-[307px] shrink-0 h-[31px] border-r border-[#c8c8c8] flex items-center justify-center">
      <svg width="20" height="24" viewBox="0 0 20 24" className="ml-[6px]">
        <path d="M2 4c2-3 5-2 6 1" fill="none" stroke="#666" />
        <path d="M5 9a5.500 5 0 0 1 12 0v9a5.500 5 0 0 1-12 0z" fill="#fff" stroke="#333" />
        <path d="M9 5h4v7H9z" fill="#00e676" />
        <path d="M5 12h12" stroke="#333" />
      </svg>
    </div>
    <div className="flex pl-[5px] w-[119px] shrink-0 h-[31px] border-r border-[#c8c8c8] text-[11.5px] leading-[15px] text-[#111] pt-[1px]">
      <div className="w-[48px] flex flex-col"><span>Selected</span><span>0</span></div>
      <div className="flex flex-col whitespace-nowrap"><span>Total Length</span><span>0</span></div>
    </div>
    <StatusCell w="w-[119px]" a="Current Layer" b="Aciklama" />
    <StatusCell w="w-[71px]" a="Grid Status" b="10 / 100" pad="pl-[8px]" />
  </div>
);

const About = () => (
  <div className="absolute left-[1395px] top-[757px] w-[169px] h-[226px] bg-[#f0f0f0] border border-[#0a7ad1] text-[11px] tracking-[-0.25px] leading-[13px] text-[#111] shadow-sm flex flex-col">
    <div className="h-[30px] bg-white flex items-center pl-[8px] text-[12px] tracking-normal">
      <svg width="17" height="17" viewBox="0 0 17 17">
        <circle cx="8.500" cy="8.500" r="7" fill="none" stroke="#7ac70c" strokeWidth="1.600" strokeDasharray="4 1.500" />
        <path d="M1 8.500h15" stroke="#333" strokeWidth="2" />
      </svg>
      <span className="ml-[5px]">About</span>
      <span className="ml-[35px] text-[14px]">?</span>
      <svg width="12" height="12" viewBox="0 0 12 12" className="ml-[33px]"><path d="M1 1l10 10M11 1 1 11" stroke="#222" /></svg>
    </div>
    <div className="mx-[11px] mt-[17px] h-[165px] border border-[#d9d9d9] relative pl-[9px] pt-[17px] whitespace-nowrap">
      <span className="absolute left-[7px] -top-[6px] bg-[#f0f0f0] px-[1px] text-[11px]">LibreCAD</span>
      <div>Version: 2.1.3</div>
      <div>Compiler: GNU GCC 4.9.1</div>
      <div>Compiled on: Sep 23 2016</div>
      <div>Qt Version: 5.4.1</div>
      <div>Boost Version: 1.60.0</div>
      <div className="mt-[7px] h-[21px] w-[123px] border-2 border-[#0078d7] bg-[#e1e1e1] flex items-center justify-center">Copy</div>
      <div className="mt-[7px] text-[#0000ff] underline flex flex-col">
        <span>Contributors</span>
        <span>License</span>
        <span>The Code</span>
      </div>
    </div>
  </div>
);

const App: React.FC = () => (
  <div className="w-[1920px] h-[1080px] relative overflow-hidden flex flex-col bg-[#f0f0f0] font-['Liberation_Sans']">
    <Menu />
    <Toolbar />
    <PropBar />
    <div className="h-[931px] flex">
      <LeftColumn />
      <LeftPanels />
      <Center />
      <RightPanel />
    </div>
    <BottomBar />
    <StatusBar />
    <About />
  </div>
);

export default App;
